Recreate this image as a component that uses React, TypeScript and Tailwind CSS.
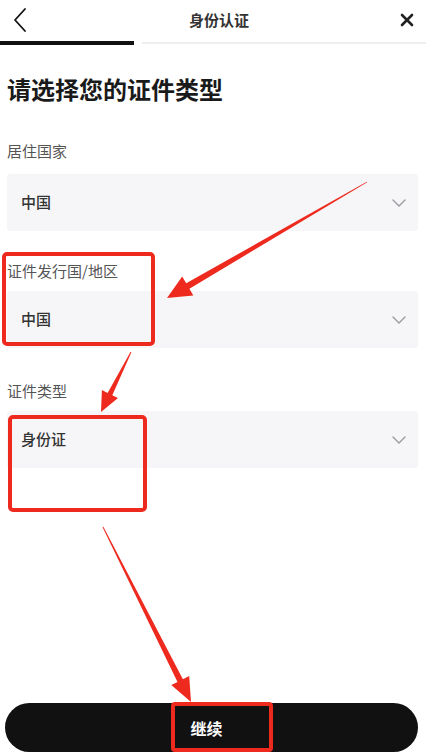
import React from 'react';

const RED = '#ee2a1f';

type Pt = [number, number];

// tapered annotation arrow: thin tail, thicker shaft, triangle head
function arrowPath(tail: Pt, tip: Pt, head = 22, headHalf = 10, shaft = 3.2) {
    const dx = tip[0] - tail[0];
    const dy = tip[1] - tail[1];
    const len = Math.hypot(dx, dy);
    const ux = dx / len;
    const uy = dy / len;
    const nx = -uy;
    const ny = ux;
    const bx = tip[0] - ux * head;
    const by = tip[1] - uy * head;
    const p = (x: number, y: number) => `${x.toFixed(1)},${y.toFixed(1)}`;
    return [
        p(tail[0] + nx * 0.4, tail[1] + ny * 0.4),
        p(bx + nx * shaft, by + ny * shaft),
        p(bx + nx * headHalf, by + ny * headHalf),
        p(tip[0], tip[1]),
        p(bx - nx * headHalf, by - ny * headHalf),
        p(bx - nx * shaft, by - ny * shaft),
        p(tail[0] - nx * 0.4, tail[1] - ny * 0.4),
    ].join(' ');
}

const Chevron = () => (
    <svg width="14" height="8" viewBox="0 0 14 8" fill="none">
        <path d="M1 1l6 6 6-6" stroke="#9a9aa0" strokeWidth="1.4" strokeLinecap="round" strokeLinejoin="round" />
    </svg>
);

const Select: React.FC<{ value: string; className?: string }> = ({ value, className }) => (
    <div className={`ml-[7px] w-[411px] h-[57px] bg-[#f6f6f8] rounded-[3px] flex items-center justify-between pl-[14px] pr-[12px] ${className ?? ''}`}>
        <span className="text-[15px] font-medium text-[#333]">{value}</span>
        <Chevron />
    </div>
);

export default function App() {
    return (
        <div
            className="relative w-[434px] h-[755px] bg-white overflow-hidden flex flex-col"
            style={{ fontFamily: '"Noto Sans CJK SC", "Noto Sans", sans-serif' }}
        >
            {/* header */}
            <div className="h-[40px] flex items-center justify-between pl-[12px] pr-[20px]">
                <svg width="16" height="26" viewBox="0 0 16 26" fill="none">
                    <path d="M13 2L3 13l10 11" stroke="#111" strokeWidth="1.8" strokeLinecap="round" strokeLinejoin="round" />
                </svg>
                <span className="text-[15px] font-bold text-[#333] ml-[10px]">身份认证</span>
                <svg width="14" height="14" viewBox="0 0 14 14" fill="none">
                    <path d="M2 2l10 10M12 2L2 12" stroke="#222" strokeWidth="2.6" strokeLinecap="round" />
                </svg>
            </div>

            {/* progress */}
            <div className="flex items-center gap-[8px] h-[5px]">
                <div className="w-[134px] h-[4px] bg-[#111]" />
                <div className="w-[284px] h-[2px] bg-[#efeff1]" />
            </div>

            <h1 className="mt-[28px] ml-[7px] text-[24px] leading-[32px] font-bold text-[#1a1a1a]">请选择您的证件类型</h1>

            <div className="mt-[36px] ml-[7px] text-[15px] leading-[20px] text-[#555]">居住国家</div>
            <Select value="中国" className="mt-[13px]" />

            <div className="mt-[30px] ml-[7px] text-[15px] leading-[20px] text-[#555]">证件发行国/地区</div>
            <Select value="中国" className="mt-[10px]" />

            <div className="mt-[33px] ml-[7px] text-[15px] leading-[20px] text-[#555]">证件类型</div>
            <Select value="身份证" className="mt-[10px]" />

            <button className="mt-auto mb-[3px] ml-[5px] w-[413px] h-[49px] rounded-full bg-[#111] text-white text-[16px] font-bold flex items-center justify-center">
                <span className="-ml-[10px]">继续</span>
            </button>

            {/* red annotations */}
            <div className="absolute left-[2px] top-[252px] w-[153px] h-[94px] border-[4px] rounded-[5px]" style={{ borderColor: RED }} />
            <div className="absolute left-[8px] top-[415px] w-[139px] h-[97px] border-[4px] rounded-[5px]" style={{ borderColor: RED }} />
            <div className="absolute left-[171px] top-[702px] w-[102px] h-[50px] border-[4px] rounded-[4px]" style={{ borderColor: RED }} />

            <svg className="absolute inset-0 pointer-events-none" width="434" height="755" viewBox="0 0 434 755">
                <polygon points={arrowPath([367, 182], [167, 298], 24, 11, 3.2)} fill={RED} />
                <polygon points={arrowPath([131, 352], [101, 412], 20, 9, 2.6)} fill={RED} />
                <polygon points={arrowPath([103, 527], [191, 702], 24, 10, 3)} fill={RED} />
            </svg>
        </div>
    );
}
